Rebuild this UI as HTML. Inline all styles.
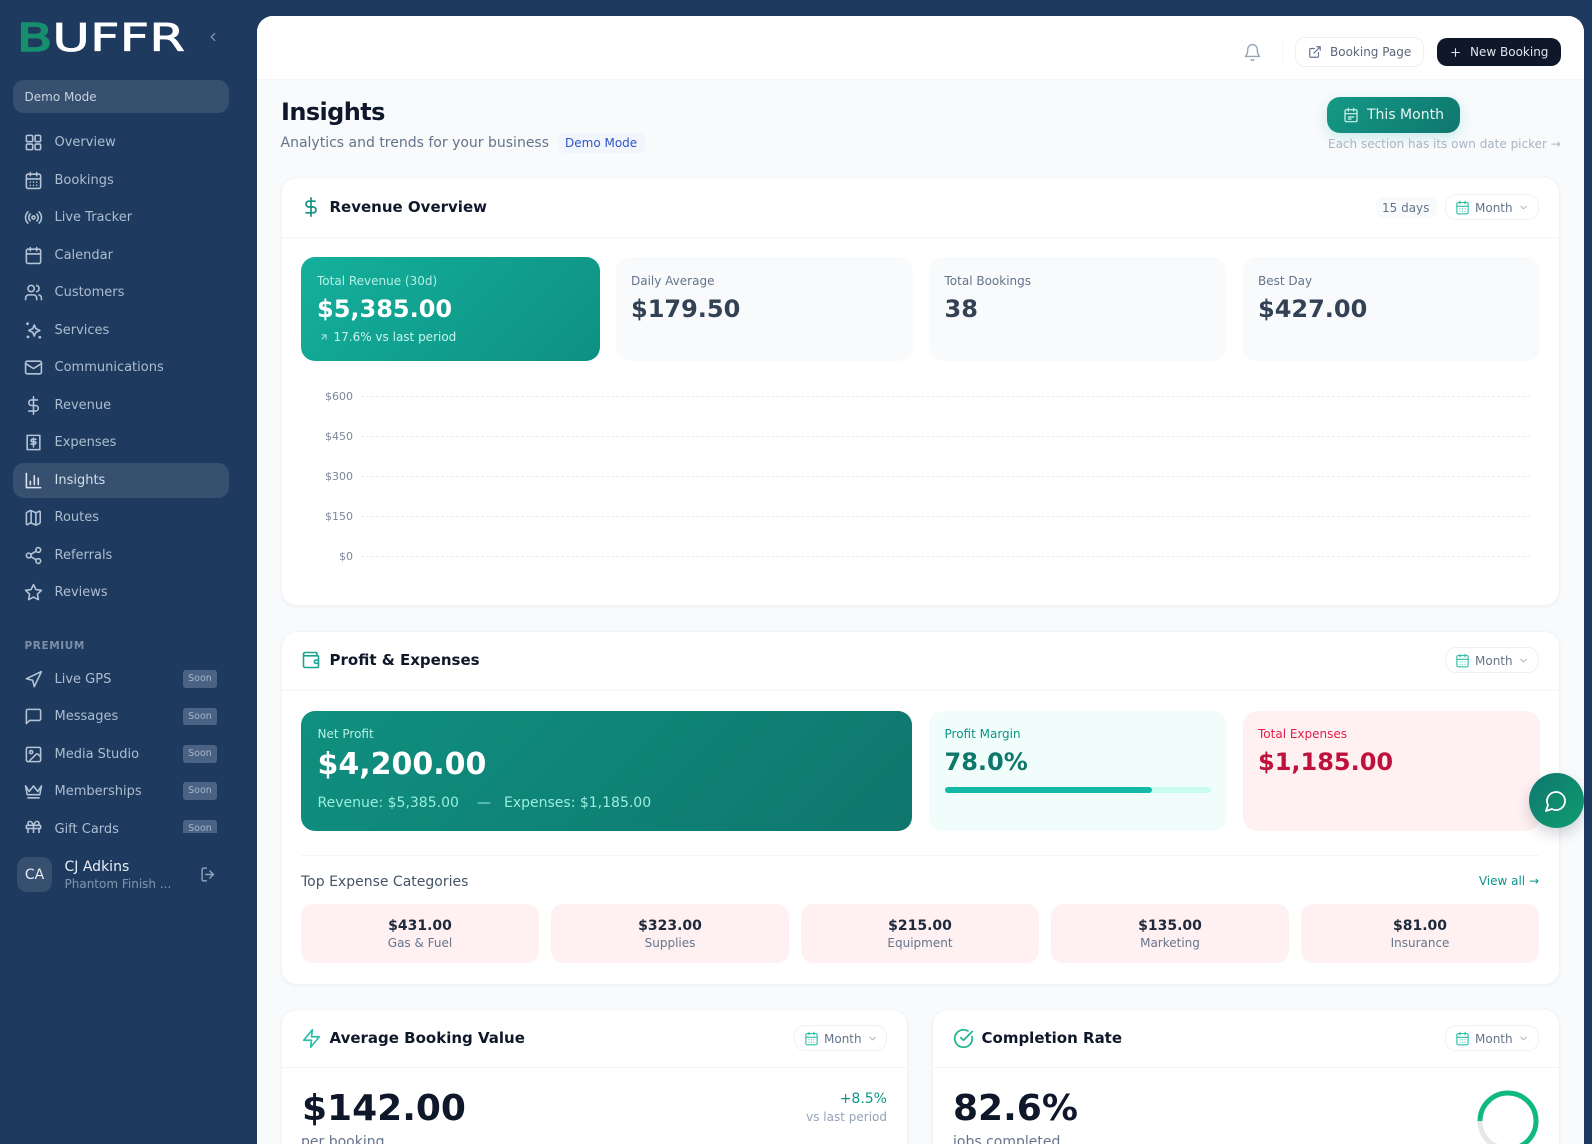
<!DOCTYPE html>
<html lang="en"><head><meta charset="utf-8"><title>Insights</title>
<style>
*{box-sizing:border-box}
html,body{margin:0;padding:0;width:1592px;height:1144px;overflow:hidden}
body{font-family:"DejaVu Sans","Liberation Sans",sans-serif}
#root{position:relative;width:1592px;height:1144px;overflow:hidden;background:#1e3a5f}
.a{position:absolute}
.t{position:absolute;white-space:nowrap;line-height:20px;height:20px}
svg.i{position:absolute;fill:none;stroke:currentColor;stroke-width:2;stroke-linecap:round;stroke-linejoin:round}
.n{font-size:13px;color:#adbdd0;left:54.5px;margin-top:1px}
.ic{color:#b4c4d6;left:24px;width:19px;height:19px}
.soon{position:absolute;left:183px;width:34px;height:17.5px;border-radius:3px;background:#4a6283;color:#a7b6c8;font-size:9.5px;line-height:17px;text-align:center}
.card{position:absolute;background:#fff;border:1px solid #f1f5f9;border-radius:16px;box-shadow:0 1px 3px rgba(15,23,42,.05)}
.title{font-size:15px;font-weight:700;color:#0f172a}
.hl{position:absolute;height:1px;background:#f3f5f8}
.stat{position:absolute;border-radius:14px;background:#f8fafc;top:257px;height:104px;width:297px}
.sl{font-size:12px;color:#64748b}
.sv{font-size:24px;font-weight:700;color:#334155;line-height:30px;height:30px}
.sel{position:absolute;height:26px;width:94px;border:1px solid #eef1f5;border-radius:11px;background:#fff}
.sel span{position:absolute;left:29px;top:1px;font-size:12px;line-height:24px;color:#64748b}
.sel svg.cal{left:9px;top:5px;width:15px;height:15px;color:#2dbfa8;stroke-width:1.8}
.sel svg.che{left:72px;top:7px;width:11px;height:11px;color:#aab4c2}
.grid{position:absolute;left:361px;width:1169px;height:0;border-top:1px dashed #e9edf2}
.yl{font-size:11px;color:#7b8798;text-align:right;width:60px;left:293px}
.box{position:absolute;top:904px;height:59px;width:238px;border-radius:12px;background:#fff1f2;text-align:center}
.box b{display:block;font-size:14px;line-height:18px;color:#1e293b;margin-top:13px}
.box i{display:block;font-style:normal;font-size:12px;line-height:16px;color:#64748b;margin-top:0}
</style></head>
<body>
<div id="root">
<svg width="0" height="0" style="position:absolute"><defs>
<symbol id="cal" viewBox="0 0 24 24"><rect x="3" y="4" width="18" height="18" rx="2"/><path d="M16 2v4M8 2v4M3 10h18M8 14h.01M12 14h.01M16 14h.01M8 18h.01M12 18h.01M16 18h.01"/></symbol>
<symbol id="calc" viewBox="0 0 24 24"><rect x="3" y="4" width="18" height="18" rx="2"/><path d="M16 2v4M8 2v4M3 10h18M8 15h8M8 18h4"/></symbol>
<symbol id="chev" viewBox="0 0 24 24"><path d="m6 9 6 6 6-6"/></symbol>
</defs></svg>

<!-- sidebar -->
<svg class="a" style="left:17px;top:18px" width="172" height="38" viewBox="0 0 172 38"><text x="0" y="33" font-family="'DejaVu Sans',sans-serif" font-size="38" font-weight="400" textLength="168" lengthAdjust="spacingAndGlyphs" fill="#fff" stroke="#fff" stroke-width=".7"><tspan fill="#178f6e" stroke="#178f6e" stroke-width="1.6">B</tspan>UFFR</text></svg>
<svg class="i" style="left:206px;top:30px;color:#8ea1b8" width="14" height="14" viewBox="0 0 24 24"><path d="m15 18-6-6 6-6"/></svg>
<div class="a" style="left:13px;top:80px;width:216px;height:33px;border-radius:11px;background:#37506f"></div>
<div class="t" style="left:24.5px;top:86.5px;font-size:12px;color:#c6d2df">Demo Mode</div>
<div class="a" style="left:13px;top:463px;width:216px;height:35px;border-radius:11px;background:#37506f"></div>

<svg class="i ic" style="top:132.5px" viewBox="0 0 24 24"><rect x="3" y="3" width="8" height="8" rx="1.5"/><rect x="14" y="3" width="7" height="8" rx="1.5"/><rect x="14" y="14" width="7" height="7" rx="1.5"/><rect x="3" y="14" width="8" height="7" rx="1.5"/></svg><div class="t n" style="top:132px">Overview</div>
<svg class="i ic" style="top:170.5px"><use href="#cal"/></svg><div class="t n" style="top:170px">Bookings</div>
<svg class="i ic" style="top:207.5px" viewBox="0 0 24 24"><path d="M4.9 19.1C1 15.2 1 8.8 4.9 4.9M7.8 16.2c-2.3-2.3-2.3-6.1 0-8.5M16.2 7.8c2.3 2.3 2.3 6.1 0 8.5M19.1 4.9C23 8.8 23 15.1 19.1 19"/><circle cx="12" cy="12" r="2"/></svg><div class="t n" style="top:207px">Live Tracker</div>
<svg class="i ic" style="top:245.5px" viewBox="0 0 24 24"><rect x="3" y="4" width="18" height="18" rx="2"/><path d="M16 2v4M8 2v4M3 10h18"/></svg><div class="t n" style="top:245px">Calendar</div>
<svg class="i ic" style="top:282.5px" viewBox="0 0 24 24"><path d="M16 21v-2a4 4 0 0 0-4-4H6a4 4 0 0 0-4 4v2"/><circle cx="9" cy="7" r="4"/><path d="M22 21v-2a4 4 0 0 0-3-3.87M16 3.13a4 4 0 0 1 0 7.75"/></svg><div class="t n" style="top:282px">Customers</div>
<svg class="i ic" style="top:320.5px" viewBox="0 0 24 24"><path d="M13 5l1.900 4.600L20 12l-5.100 2.400L13 19l-1.900-4.600L6 12l5.100-2.400z"/><path d="M4.500 3.500h.01M5 20h.01M20 20.500h.01" stroke-width="3.500"/></svg><div class="t n" style="top:320px">Services</div>
<svg class="i ic" style="top:357.5px" viewBox="0 0 24 24"><rect x="2" y="4" width="20" height="16" rx="2"/><path d="m22 7-8.97 5.7a1.94 1.94 0 0 1-2.06 0L2 7"/></svg><div class="t n" style="top:357px">Communications</div>
<svg class="i ic" style="top:395.5px" viewBox="0 0 24 24"><path d="M12 1v22M17 5H9.5a3.5 3.5 0 0 0 0 7h5a3.5 3.5 0 0 1 0 7H6"/></svg><div class="t n" style="top:395px">Revenue</div>
<svg class="i ic" style="top:432.5px" viewBox="0 0 24 24"><path d="M4 3h16v18H4z"/><path d="M15 8h-4.500a1.500 1.500 0 0 0 0 3h3a1.500 1.500 0 0 1 0 3H9M12 6.500v11"/></svg><div class="t n" style="top:432px">Expenses</div>
<svg class="i ic" style="top:470.5px;color:#dbe4ee" viewBox="0 0 24 24"><path d="M3 3v18h18M8 17v-4M13 17V6M18 17V9"/></svg><div class="t n" style="top:470px;color:#d5dfea">Insights</div>
<svg class="i ic" style="top:507.5px" viewBox="0 0 24 24"><path d="M14.100 5.600 8.900 3.400a2 2 0 0 0-1.700.1L3.500 5.600A1 1 0 0 0 3 6.500V20a1 1 0 0 0 1.500.9l3-1.700a2 2 0 0 1 1.700-.1l5.300 2.300a2 2 0 0 0 1.700-.1l3.700-2.100a1 1 0 0 0 .6-.9V5a1 1 0 0 0-1.500-.9l-3.200 1.700a2 2 0 0 1-1.700-.2zM15 5.800v15M9 3.300v15"/></svg><div class="t n" style="top:507px">Routes</div>
<svg class="i ic" style="top:545.5px" viewBox="0 0 24 24"><circle cx="18" cy="5" r="3"/><circle cx="6" cy="12" r="3"/><circle cx="18" cy="19" r="3"/><path d="m8.590 13.510 6.830 3.980M15.410 6.510l-6.820 3.980"/></svg><div class="t n" style="top:545px">Referrals</div>
<svg class="i ic" style="top:582.5px" viewBox="0 0 24 24"><path d="M12 2l3.090 6.260L22 9.270l-5 4.870 1.180 6.880L12 17.770l-6.180 3.250L7 14.140 2 9.270l6.910-1.010z"/></svg><div class="t n" style="top:582px">Reviews</div>

<div class="t" style="left:24.5px;top:636px;font-size:10.5px;font-weight:700;letter-spacing:.6px;color:#7b8fa8">PREMIUM</div>
<svg class="i ic" style="top:669.5px" viewBox="0 0 24 24"><path d="M3 11l19-9-9 19-2-8z"/></svg><div class="t n" style="top:669px">Live GPS</div><div class="soon" style="top:670px">Soon</div>
<svg class="i ic" style="top:706.5px" viewBox="0 0 24 24"><path d="M21 15a2 2 0 0 1-2 2H7l-4 4V5a2 2 0 0 1 2-2h14a2 2 0 0 1 2 2z"/></svg><div class="t n" style="top:706px">Messages</div><div class="soon" style="top:707.5px">Soon</div>
<svg class="i ic" style="top:744.5px" viewBox="0 0 24 24"><rect x="3" y="3" width="18" height="18" rx="2"/><circle cx="9" cy="9" r="2"/><path d="m21 15-3.090-3.090a2 2 0 0 0-2.830 0L6 21"/></svg><div class="t n" style="top:744px">Media Studio</div><div class="soon" style="top:745px">Soon</div>
<svg class="i ic" style="top:781.5px" viewBox="0 0 24 24"><path d="M2 5l4.500 7L12 5l5.500 7L22 5l-2 11H4zM5 20h14"/></svg><div class="t n" style="top:781px">Memberships</div><div class="soon" style="top:782px">Soon</div>
<div class="a" style="left:0;top:810px;width:256px;height:23px;overflow:hidden">
<svg class="i ic" style="top:8.5px" viewBox="0 0 24 24"><rect x="3" y="8" width="18" height="4" rx="1"/><path d="M12 8v13M19 12v7a2 2 0 0 1-2 2H7a2 2 0 0 1-2-2v-7M7.500 8a2.500 2.500 0 0 1 0-5C10 3 12 8 12 8s2-5 4.500-5a2.500 2.500 0 0 1 0 5"/></svg>
<div class="t n" style="top:9px">Gift Cards</div><div class="soon" style="top:10px">Soon</div></div>

<div class="a" style="left:17px;top:857px;width:35px;height:35px;border-radius:10px;background:#37506f;color:#e8eef5;font-size:14px;font-weight:500;line-height:37px;text-align:center">CA</div>
<div class="t" style="left:64.5px;top:857px;font-size:14px;color:#e9eff5">CJ Adkins</div>
<div class="t" style="left:64.5px;top:874px;font-size:12px;color:#8296ad">Phantom Finish ...</div>
<svg class="i" style="left:200px;top:866px;color:#8fa3ba" width="17" height="17" viewBox="0 0 24 24"><path d="M9 21H5a2 2 0 0 1-2-2V5a2 2 0 0 1 2-2h4M14 17l5-5-5-5M19 12H8"/></svg>

<!-- main panel -->
<div class="a" style="left:257px;top:16px;width:1327px;height:1128px;background:#f8fafc;border-radius:16px 16px 0 0;overflow:hidden"></div>
<div class="a" style="left:257px;top:16px;width:1327px;height:64px;background:#fff;border-radius:16px 16px 0 0;border-bottom:1px solid #f3f5f8"></div>

<svg class="i" style="left:1243px;top:43px;color:#94a3b8;stroke-width:1.7" width="19" height="19" viewBox="0 0 24 24"><path d="M6 8a6 6 0 0 1 12 0c0 7 3 9 3 9H3s3-2 3-9M10.300 21a1.940 1.940 0 0 0 3.400 0"/></svg>
<div class="a" style="left:1282px;top:40px;width:1px;height:24px;background:#f5f7fa"></div>
<div class="a" style="left:1295px;top:37px;width:129px;height:30px;border:1px solid #eceff3;border-radius:10px;background:#fff"></div>
<svg class="i" style="left:1308px;top:45px;color:#64748b;stroke-width:2" width="14" height="14" viewBox="0 0 24 24"><path d="M18 13v6a2 2 0 0 1-2 2H5a2 2 0 0 1-2-2V8a2 2 0 0 1 2-2h6M15 3h6v6M10 14 21 3"/></svg>
<div class="t" style="left:1330px;top:42px;font-size:12px;color:#5b6779">Booking Page</div>
<div class="a" style="left:1437px;top:38px;width:124px;height:28px;border-radius:10px;background:#0f172a"></div>
<svg class="i" style="left:1449px;top:46px;color:#e2e8f0" width="13" height="13" viewBox="0 0 24 24"><path d="M5 12h14M12 5v14"/></svg>
<div class="t" style="left:1470px;top:42px;font-size:12px;color:#dfe5ec">New Booking</div>

<div class="t" style="left:281px;top:102px;font-size:24px;letter-spacing:-.6px;font-weight:700;color:#0f172a">Insights</div>
<div class="t" style="left:280.5px;top:133px;font-size:14px;color:#64748b">Analytics and trends for your business</div>
<div class="a" style="left:558px;top:133px;width:87px;height:20px;border-radius:7px;background:#f1f5fc"></div>
<div class="t" style="left:565px;top:133px;font-size:12px;color:#2f55c8">Demo Mode</div>

<div class="a" style="left:1327px;top:97px;width:133px;height:36px;border-radius:13px;background:linear-gradient(135deg,#149a86,#0f766e);box-shadow:0 4px 12px rgba(20,184,166,.22)"></div>
<svg class="i" style="left:1343px;top:107px;color:#d6f5ee;stroke-width:1.8" width="16" height="16"><use href="#calc"/></svg>
<div class="t" style="left:1367px;top:105px;font-size:14px;color:#e6f7f3">This Month</div>
<div class="t" style="left:1328px;top:134px;font-size:12px;color:#aab5c4">Each section has its own date picker →</div>

<!-- revenue overview -->
<div class="card" style="left:280.5px;top:177px;width:1279.5px;height:429px"></div>
<div class="hl" style="left:282px;top:237px;width:1277px"></div>
<svg class="i" style="left:301px;top:197px;color:#12907f;stroke-width:2" width="20" height="20" viewBox="0 0 24 24"><path d="M12 1v22M17 5H9.500a3.500 3.500 0 0 0 0 7h5a3.500 3.500 0 0 1 0 7H6"/></svg>
<div class="t title" style="left:329.5px;top:197px">Revenue Overview</div>
<div class="a" style="left:1376px;top:197px;width:61px;height:21px;border-radius:7px;background:#f8fafc"></div>
<div class="t" style="left:1382px;top:197.5px;font-size:12px;color:#64748b">15 days</div>
<div class="sel" style="left:1445px;top:194px"><svg class="i cal"><use href="#cal"/></svg><span>Month</span><svg class="i che"><use href="#chev"/></svg></div>

<div class="a" style="left:301px;top:257px;width:298.5px;height:104px;border-radius:14px;background:linear-gradient(135deg,#14b09c,#0e9082)"></div>
<div class="t sl" style="left:317px;top:271px;color:#b5f0e5">Total Revenue (30d)</div>
<div class="t sv" style="left:317px;top:294px;color:#fff">$5,385.00</div>
<svg class="i" style="left:319px;top:332px;color:#c8f5ec" width="10" height="10" viewBox="0 0 24 24"><path d="M7 7h10v10M7 17 17 7"/></svg>
<div class="t sl" style="left:333.5px;top:327px;color:#c8f5ec">17.6% vs last period</div>

<div class="stat" style="left:616px"></div>
<div class="t sl" style="left:631px;top:271px">Daily Average</div>
<div class="t sv" style="left:631px;top:294px">$179.50</div>
<div class="stat" style="left:929px"></div>
<div class="t sl" style="left:944.5px;top:271px">Total Bookings</div>
<div class="t sv" style="left:944.5px;top:294px">38</div>
<div class="stat" style="left:1243px"></div>
<div class="t sl" style="left:1258px;top:271px">Best Day</div>
<div class="t sv" style="left:1258px;top:294px">$427.00</div>

<div class="grid" style="top:395.5px"></div><div class="t yl" style="top:386.5px">$600</div>
<div class="grid" style="top:435.5px"></div><div class="t yl" style="top:426.5px">$450</div>
<div class="grid" style="top:475.5px"></div><div class="t yl" style="top:466.5px">$300</div>
<div class="grid" style="top:515.5px"></div><div class="t yl" style="top:506.5px">$150</div>
<div class="grid" style="top:555.5px"></div><div class="t yl" style="top:546.5px">$0</div>

<!-- profit -->
<div class="card" style="left:280.5px;top:631px;width:1279.5px;height:354px"></div>
<div class="hl" style="left:282px;top:690px;width:1277px"></div>
<svg class="i" style="left:301px;top:650px;color:#1ba390;stroke-width:1.9" width="20" height="20" viewBox="0 0 24 24"><path d="M19 7V4a1 1 0 0 0-1-1H5a2 2 0 0 0 0 4h15a1 1 0 0 1 1 1v12a1 1 0 0 1-1 1H5a2 2 0 0 1-2-2V5"/><path d="M21 12h-3a2 2 0 0 0 0 4h3"/></svg>
<div class="t title" style="left:329.5px;top:650px">Profit &amp; Expenses</div>
<div class="sel" style="left:1445px;top:647px"><svg class="i cal"><use href="#cal"/></svg><span>Month</span><svg class="i che"><use href="#chev"/></svg></div>

<div class="a" style="left:301px;top:711px;width:611px;height:119.5px;border-radius:14px;background:linear-gradient(135deg,#0f9080,#0f766e)"></div>
<div class="t sl" style="left:317.5px;top:724px;color:#b5f0e5">Net Profit</div>
<div class="t" style="left:317.5px;top:750px;height:30px;line-height:30px;font-size:30px;font-weight:700;color:#fff">$4,200.00</div>
<div class="t" style="left:317.5px;top:793px;font-size:14px;color:#99eedd">Revenue: $5,385.00</div>
<div class="t" style="left:477px;top:793px;font-size:14px;color:#99eedd">—</div>
<div class="t" style="left:504px;top:793px;font-size:14px;color:#99eedd">Expenses: $1,185.00</div>

<div class="a" style="left:929px;top:711px;width:297px;height:119.5px;border-radius:14px;background:#f0fdfa"></div>
<div class="t sl" style="left:944.5px;top:724px;color:#0d9488">Profit Margin</div>
<div class="t sv" style="left:944.5px;top:747px;color:#0f766e">78.0%</div>
<div class="a" style="left:944.5px;top:787px;width:266px;height:6px;border-radius:3px;background:#ccfbf1"></div>
<div class="a" style="left:944.5px;top:787px;width:207px;height:6px;border-radius:3px;background:#14b8a6"></div>

<div class="a" style="left:1243px;top:711px;width:297px;height:119.5px;border-radius:14px;background:#fff1f2"></div>
<div class="t sl" style="left:1258px;top:724px;color:#e11d48">Total Expenses</div>
<div class="t sv" style="left:1258px;top:747px;color:#be123c">$1,185.00</div>

<div class="hl" style="left:301px;top:855px;width:1238px"></div>
<div class="t" style="left:301px;top:872px;font-size:14px;color:#475569">Top Expense Categories</div>
<div class="t" style="right:53px;top:871px;font-size:12px;color:#0d9488">View all →</div>

<div class="box" style="left:301px"><b>$431.00</b><i>Gas &amp; Fuel</i></div>
<div class="box" style="left:551px"><b>$323.00</b><i>Supplies</i></div>
<div class="box" style="left:801px"><b>$215.00</b><i>Equipment</i></div>
<div class="box" style="left:1051px"><b>$135.00</b><i>Marketing</i></div>
<div class="box" style="left:1301px"><b>$81.00</b><i>Insurance</i></div>

<!-- bottom row -->
<div class="card" style="left:280.5px;top:1009px;width:627.5px;height:160px"></div>
<div class="hl" style="left:282px;top:1067px;width:625px"></div>
<svg class="i" style="left:301px;top:1028px;color:#2dbfa8;stroke-width:1.9" width="21" height="21" viewBox="0 0 24 24"><path d="M13 2 3 14h9l-1 8 10-12h-9z"/></svg>
<div class="t title" style="left:329.5px;top:1028px">Average Booking Value</div>
<div class="sel" style="left:794px;top:1025px;width:93px"><svg class="i cal"><use href="#cal"/></svg><span>Month</span><svg class="i che"><use href="#chev"/></svg></div>
<div class="t" style="left:302px;top:1091px;height:36px;line-height:36px;font-size:36px;font-weight:700;color:#0f172a">$142.00</div>
<div class="t" style="left:301px;top:1132px;font-size:14px;color:#64748b">per booking</div>
<div class="t" style="right:705px;top:1089px;font-size:14px;color:#0d9488">+8.5%</div>
<div class="t" style="right:705px;top:1107px;font-size:12px;color:#94a3b8">vs last period</div>

<div class="card" style="left:932px;top:1009px;width:628px;height:160px"></div>
<div class="hl" style="left:933px;top:1067px;width:626px"></div>
<svg class="i" style="left:953px;top:1028px;color:#22b58f;stroke-width:2" width="21" height="21" viewBox="0 0 24 24"><path d="M21.800 10A10 10 0 1 1 17 3.340"/><path d="m9 11 3 3L22 4"/></svg>
<div class="t title" style="left:981.5px;top:1028px">Completion Rate</div>
<div class="sel" style="left:1445px;top:1025px"><svg class="i cal"><use href="#cal"/></svg><span>Month</span><svg class="i che"><use href="#chev"/></svg></div>
<div class="t" style="left:953px;top:1091px;height:36px;line-height:36px;font-size:36px;font-weight:700;color:#0f172a">82.6%</div>
<div class="t" style="left:953px;top:1132px;font-size:14px;color:#64748b">jobs completed</div>
<svg class="a" style="left:1475.5px;top:1088.5px" width="64" height="64" viewBox="0 0 64 64"><circle cx="32" cy="32" r="28" fill="none" stroke="#e5e7eb" stroke-width="5"/><circle cx="32" cy="32" r="28" fill="none" stroke="#10b981" stroke-width="5" stroke-dasharray="145.300 175.900" transform="rotate(180 32 32)"/></svg>

<!-- fab -->
<div class="a" style="left:1529px;top:773px;width:55px;height:55px;border-radius:50%;background:linear-gradient(135deg,#0f766e,#0f9d70);box-shadow:0 6px 14px rgba(15,23,42,.18)"></div>
<svg class="i" style="left:1544px;top:789px;color:#fff;stroke-width:1.8" width="24" height="24" viewBox="0 0 24 24"><path d="M7.900 20A9 9 0 1 0 4 16.100L2 22z"/></svg>
</div>
</body></html>
